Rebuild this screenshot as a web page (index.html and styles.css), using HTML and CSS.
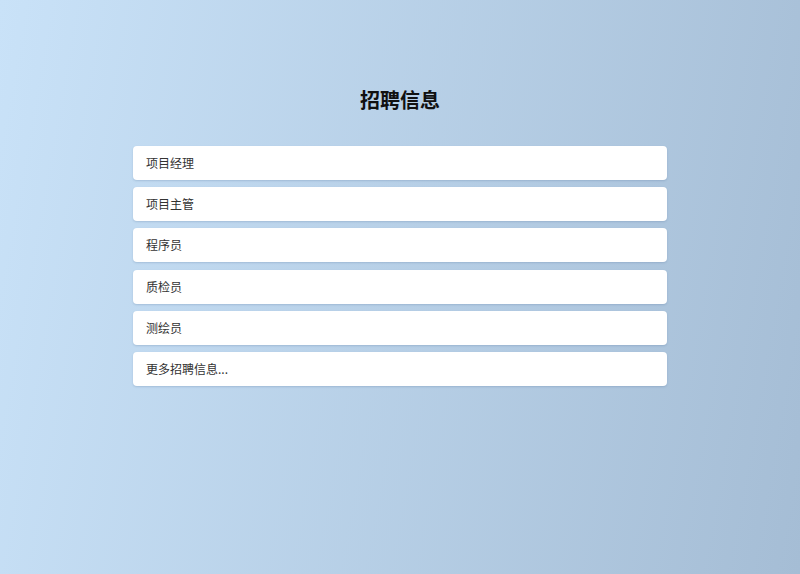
FILE: index.html
```html
<!DOCTYPE html>
<html lang="zh">
<head>
<meta charset="utf-8">
<title>招聘信息</title>
<link rel="stylesheet" href="styles.css">
</head>
<body>
<div class="page">
  <h1 class="title">招聘信息</h1>
  <ul class="jobs">
    <li class="job">项目经理</li>
    <li class="job">项目主管</li>
    <li class="job">程序员</li>
    <li class="job">质检员</li>
    <li class="job">测绘员</li>
    <li class="job">更多招聘信息...</li>
  </ul>
</div>
</body>
</html>
```
FILE: styles.css
```css
html, body {
  margin: 0;
  padding: 0;
  height: 100%;
}
body {
  background: linear-gradient(100deg, #c9e2f8 0%, #a5bdd5 100%);
  font-family: "Microsoft YaHei", "Noto Sans CJK SC", sans-serif;
  color: #333;
}
.page {
  width: 534px;
  margin: 0 auto;
  padding-top: 86px;
}
.title {
  margin: 0 0 32px;
  text-align: center;
  font-size: 20px;
  line-height: 28px;
  font-weight: bold;
  color: #111;
}
.jobs {
  list-style: none;
  margin: 0;
  padding: 0;
  display: flex;
  flex-direction: column;
  gap: 7.2px;
}
.job {
  background: #fff;
  border-radius: 4px;
  padding: 0 13px;
  height: 34px;
  line-height: 34px;
  font-size: 12px;
  box-shadow: 0 1px 2px rgba(80, 110, 150, 0.25);
}
```
